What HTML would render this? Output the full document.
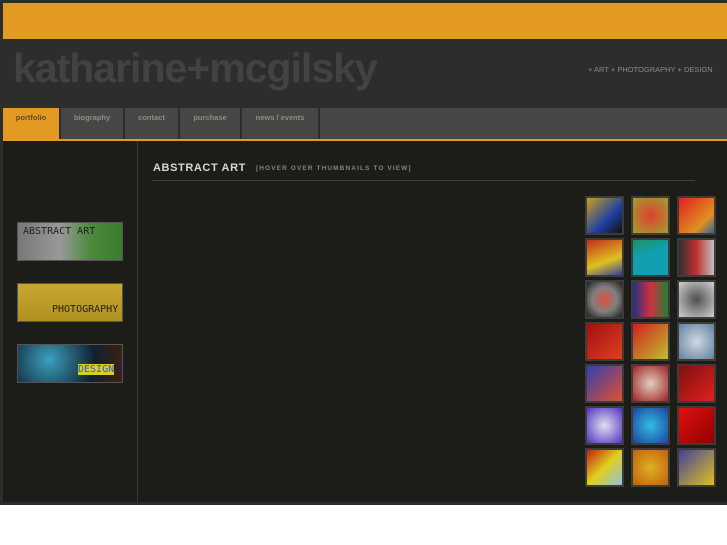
<!DOCTYPE html>
<html><head><meta charset="utf-8"><style>
*{margin:0;padding:0;box-sizing:border-box}
body{width:727px;height:545px;background:#fff;font-family:"Liberation Sans",Arial,sans-serif;position:relative;overflow:hidden}
#wrap{position:absolute;left:0;top:0;width:727px;height:505px;background:#2d2d2b}
.a{position:absolute;white-space:nowrap}
#orange{left:3px;top:3px;width:724px;height:36px;background:#e39a22}
#logo{left:13px;top:45px;font-size:41px;font-weight:bold;color:#424240;letter-spacing:-1px}
#tag{left:588px;top:65px;font-size:7.5px;color:#8a8a84;letter-spacing:0}
.tab{position:absolute;top:108px;height:31px;background:#474745;color:#8c8c86;font-size:7.5px;font-weight:bold;text-align:center;padding-top:5px}
#line{left:3px;top:139px;width:724px;height:2px;background:#e39a22}
#content{left:3px;top:141px;width:724px;height:361px;background:#1c1c18}
#sep{left:137px;top:141px;width:1px;height:361px;background:#3a3a36}
.btn{position:absolute;left:17px;width:106px;height:39px;border:1px solid #555;font-family:"DejaVu Sans Mono",monospace;font-size:10px;white-space:nowrap;overflow:hidden}
#title{left:153px;top:162px;font-size:11px;font-weight:bold;color:#d8d8d0;letter-spacing:.6px}
#sub{left:256px;top:165px;font-size:6.5px;font-weight:bold;color:#84847c;letter-spacing:1.1px}
#hr{left:152px;top:180px;width:543px;height:1px;background:#3e3e3a}
.t{position:absolute;width:39px;height:39px;border:2px solid #3c3c38}
</style></head><body>
<div id="wrap">
<div class="a" id="orange"></div>
<div class="a" id="logo">katharine+mcgilsky</div>
<div class="a" id="tag">+ ART + PHOTOGRAPHY + DESIGN</div>
<div class="tab" style="left:3px;width:56px;background:#e39a22;color:#6a4a10">portfolio</div>
<div class="tab" style="left:61px;width:62px">biography</div>
<div class="tab" style="left:125px;width:53px">contact</div>
<div class="tab" style="left:180px;width:60px">purchase</div>
<div class="tab" style="left:242px;width:76px">news / events</div>
<div class="tab" style="left:320px;width:407px"></div>
<div class="a" id="line"></div>
<div class="a" id="content"></div>
<div class="a" id="sep"></div>
<div class="btn" style="top:222px;background:linear-gradient(90deg,#777 0%,#999 40%,#4a8a3a 70%,#3a7a30 100%);color:#222;padding:3px 0 0 5px">ABSTRACT ART</div>
<div class="btn" style="top:283px;background:linear-gradient(180deg,#c9a830,#b09020);color:#222;padding:20px 0 0 34px">PHOTOGRAPHY</div>
<div class="btn" style="top:344px;background:radial-gradient(circle at 30% 40%,#3aa0c0,#102030 60%,#402010);color:#3050ff;padding:19px 0 0 60px"><span style="background:#d8d020">DESIGN</span></div>
<div class="a" id="title">ABSTRACT ART</div>
<div class="a" id="sub">[HOVER OVER THUMBNAILS TO VIEW]</div>
<div class="a" id="hr"></div>
<div class="t" style="left:585px;top:196px;background:linear-gradient(135deg,#c9a020,#2040a0 60%,#101010)"></div>
<div class="t" style="left:631px;top:196px;background:radial-gradient(#e04030,#a0a030)"></div>
<div class="t" style="left:677px;top:196px;background:linear-gradient(135deg,#e02020,#e09020 70%,#3060a0)"></div>
<div class="t" style="left:585px;top:238px;background:linear-gradient(160deg,#c03020,#e0c020 60%,#3040a0)"></div>
<div class="t" style="left:631px;top:238px;background:linear-gradient(160deg,#209060,#10a0b0 40%)"></div>
<div class="t" style="left:677px;top:238px;background:linear-gradient(90deg,#303030,#c03030,#c0c0c0)"></div>
<div class="t" style="left:585px;top:280px;background:radial-gradient(#e05040,#808080 50%,#202020)"></div>
<div class="t" style="left:631px;top:280px;background:linear-gradient(90deg,#203080,#d03040,#208030)"></div>
<div class="t" style="left:677px;top:280px;background:radial-gradient(#505050,#d0d0d0)"></div>
<div class="t" style="left:585px;top:322px;background:linear-gradient(135deg,#a01010,#e04020)"></div>
<div class="t" style="left:631px;top:322px;background:linear-gradient(135deg,#d02020,#c0c030)"></div>
<div class="t" style="left:677px;top:322px;background:radial-gradient(#d0d8e0,#6080a0)"></div>
<div class="t" style="left:585px;top:364px;background:linear-gradient(135deg,#3040b0,#e05030)"></div>
<div class="t" style="left:631px;top:364px;background:radial-gradient(#e0d0c0,#a02020)"></div>
<div class="t" style="left:677px;top:364px;background:linear-gradient(135deg,#801010,#e02020)"></div>
<div class="t" style="left:585px;top:406px;background:radial-gradient(#e0e0f0,#5030c0)"></div>
<div class="t" style="left:631px;top:406px;background:radial-gradient(#30c0e0,#2040a0)"></div>
<div class="t" style="left:677px;top:406px;background:linear-gradient(135deg,#e01010,#900000)"></div>
<div class="t" style="left:585px;top:448px;background:linear-gradient(135deg,#c02010,#e0d020,#90c0e0)"></div>
<div class="t" style="left:631px;top:448px;background:radial-gradient(#e0b020,#c06010)"></div>
<div class="t" style="left:677px;top:448px;background:linear-gradient(135deg,#4040a0,#e0c020)"></div>
</div>
</body></html>
